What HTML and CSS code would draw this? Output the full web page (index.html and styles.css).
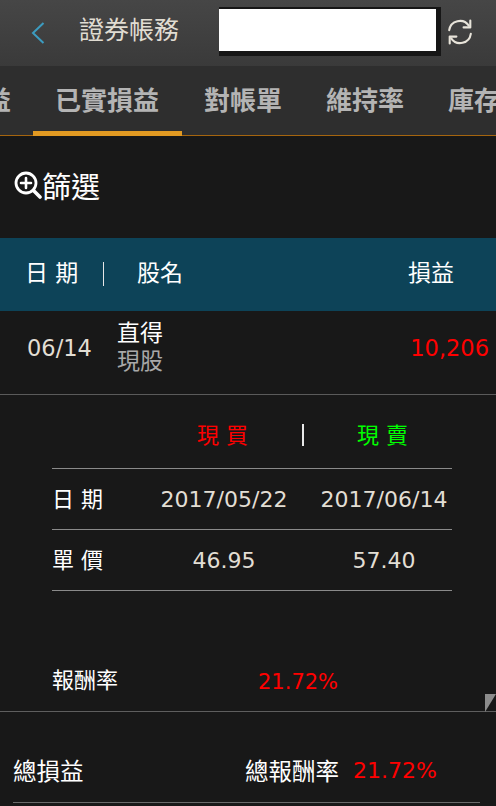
FILE: index.html
```html
<!DOCTYPE html>
<html lang="zh-Hant">
<head>
<meta charset="utf-8">
<title>證券帳務</title>
<link rel="stylesheet" href="styles.css">
</head>
<body>
<div class="page">
  <header class="topbar">
    <svg class="back" viewBox="0 0 14 22" width="14" height="22"><path d="M12.5 1 L2 11 L12.5 21" fill="none" stroke="#3c9cc0" stroke-width="2"/></svg>
    <div class="title">證券帳務</div>
    <div class="account"><div class="account-box"></div></div>
    <svg class="refresh" viewBox="0 0 28 28" width="28" height="28">
      <g fill="none" stroke="#e8e4da" stroke-width="2.1" stroke-linecap="round" stroke-linejoin="round">
        <path d="M3.2 12.2 A10.8 10.8 0 0 1 22.8 7.6"/>
        <path d="M24.3 2.6 L24.3 9.4 L17.6 9.4"/>
        <path d="M24.8 15.8 A10.8 10.8 0 0 1 5.2 20.4"/>
        <path d="M3.7 25.4 L3.7 18.6 L10.4 18.6"/>
      </g>
    </svg>
  </header>
  <nav class="tabs">
    <div class="tab">未實損益</div>
    <div class="tab tab-active">已實損益</div>
    <div class="tab">對帳單</div>
    <div class="tab">維持率</div>
    <div class="tab">庫存</div>
  </nav>
  <div class="filter">
    <svg class="zoom" viewBox="0 0 28 28" width="28" height="28">
      <g fill="none" stroke="#fff" stroke-linecap="round">
        <circle cx="12" cy="12" r="10" stroke-width="2.8"/>
        <path d="M12 7 V17 M7 12 H17" stroke-width="2.6"/>
        <path d="M19.5 19.5 L26 26" stroke-width="3.6"/>
      </g>
    </svg>
    <span>篩選</span>
  </div>
  <div class="thead">
    <span class="th-date">日 期</span>
    <span class="th-sep"></span>
    <span class="th-name">股名</span>
    <span class="th-pl">損益</span>
  </div>
  <div class="row">
    <span class="row-date num">06/14</span>
    <div class="row-name">
      <div class="stock">直得</div>
      <div class="kind">現股</div>
    </div>
    <span class="row-pl num">10,206</span>
  </div>
  <section class="detail">
    <div class="sides">
      <span class="side side-buy">現 買</span>
      <span class="side-sep"></span>
      <span class="side side-sell">現 賣</span>
    </div>
    <div class="grid">
      <div class="label">日 期</div>
      <div class="val num">2017/05/22</div>
      <div class="val val-sell num">2017/06/14</div>
    </div>
    <div class="grid">
      <div class="label">單 價</div>
      <div class="val num">46.95</div>
      <div class="val val-sell num">57.40</div>
    </div>
    <div class="rate">
      <span class="rate-label">報酬率</span>
      <span class="rate-val num">21.72%</span>
      <svg class="corner" viewBox="0 0 11 18" width="11" height="18"><path d="M0 0 H11 L0 18 Z" fill="#8c8c8c"/></svg>
    </div>
  </section>
  <footer class="total">
    <span class="total-label">總損益</span>
    <span class="total-rate-label">總報酬率</span>
    <span class="total-rate num">21.72%</span>
  </footer>
</div>
</body>
</html>
```
FILE: styles.css
```css
* { box-sizing: border-box; }
html, body { margin: 0; padding: 0; background: #181818; }
body { font-family: "Noto Sans CJK TC", "Noto Sans", sans-serif; color: #fff; }
.page { width: 496px; height: 806px; overflow: hidden; }
.num { font-family: "DejaVu Sans", sans-serif; }

.topbar { height: 66px; display: flex; align-items: flex-start; background: linear-gradient(#464646, #3a3a3a); }
.back { margin: 22px 0 0 31px; flex: none; }
.title { margin: 10px 0 0 34px; width: 140px; font-size: 25px; line-height: 36px; color: #e0dcd2; flex: none; }
.account { margin: 7px 0 0 0; padding: 2px 5px 5px 0; background: #161616; flex: none; }
.account-box { width: 217px; height: 42px; background: #fff; }
.refresh { margin: 18px 0 0 5px; flex: none; }

.tabs { height: 70px; display: flex; margin-left: -115px; background: #2e2e2e; border-bottom: 1px solid #a5650f; }
.tab { flex: none; padding: 0 22px; height: 69px; line-height: 66px; font-size: 26px; font-weight: 700; color: #b4b4b4; }
.tab-active { padding: 0 23px 0 22px; border-bottom: 5px solid #e29a22; margin-bottom: -1px; height: 70px; }

.filter { height: 102px; display: flex; align-items: center; padding: 0 0 5px 14px; font-size: 29px; }
.zoom { flex: none; }

.thead { height: 73px; display: flex; align-items: center; background: #0d4358; font-size: 23px; padding: 0 42px 2px 25px; }
.th-date { width: 78px; margin-bottom: 6px; word-spacing: 2px; }
.th-sep { width: 1px; height: 24px; background: #e6e6e6; }
.th-name { margin: 0 0 6px 33px; flex: 1; }
.th-pl { margin-bottom: 6px; }

.row { height: 84px; display: flex; align-items: center; padding: 0 7px 10px 27px; border-bottom: 1px solid #5a5a5a; }
.row-date { width: 90px; font-size: 22.5px; color: #e2ded4; }
.row-name { flex: 1; font-size: 23px; line-height: 28px; margin-bottom: 6px; }
.kind { color: #a8a8a8; }
.row-pl { font-size: 22.5px; color: #f00; }

.detail { height: 317px; padding: 0 44px 0 52px; border-bottom: 1px solid #5e5e5e; }
.sides { height: 74px; display: flex; align-items: center; font-size: 22px; border-bottom: 1px solid #8a8a8a; padding: 7px 0 5px 145px; }
.side { flex: none; width: 105px; word-spacing: 2px; }
.side-buy { color: #f00; }
.side-sell { color: #0f0; margin-left: 53px; width: 90px; }
.side-sep { flex: none; width: 2px; height: 22px; background: #e8e8e8; margin-top: 4px; }
.grid { height: 61px; display: grid; grid-template-columns: 92px 160px 148px; align-items: center; border-bottom: 1px solid #8a8a8a; }
.label { font-size: 22px; word-spacing: 2px; margin-bottom: 5px; }
.val { font-size: 22px; color: #e2ded4; text-align: center; white-space: nowrap; }
.val-sell { width: 160px; }
.rate { position: relative; height: 121px; display: flex; align-items: flex-end; padding-bottom: 18px; margin-right: -44px; }
.rate-label { width: 206px; font-size: 22px; }
.rate-val { font-size: 21px; color: #f00; }
.corner { position: absolute; right: 0; bottom: 0; }

.total { height: 91px; margin: 0 16px 0 13px; display: flex; align-items: center; padding-top: 26px; border-bottom: 1px solid #6a6a6a; font-size: 23.5px; }
.total-label { width: 232px; }
.total-rate-label { width: 108px; }
.total-rate { color: #f00; font-size: 22px; }
```
